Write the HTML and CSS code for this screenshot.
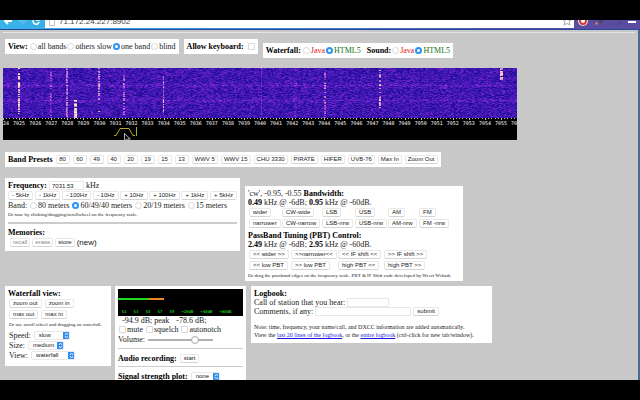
FILE: index.html
```html
<!DOCTYPE html>
<html lang="en">
<head>
    <meta charset="UTF-8">
    <meta name="viewport" content="width=device-width, initial-scale=1.0">
    <title>WebSDR</title>
    <link rel="stylesheet" href="styles.css">
</head>
<body>
    <header class="browser-bar">
        <nav class="browser-nav">
            <svg width="45" height="12" viewBox="0 0 45 12" fill="none" stroke-width="2">
                <path d="M12 5H5M8 2L5 5L8 8" stroke="#fff"/>
                <path d="M18 5H25M22 2L25 5L22 8" stroke="#5cbcec"/>
                <path d="M38.500 3.500A3 3 0 1 0 39 6M39 1V4H36" stroke="#fff" stroke-width="1.500"/>
            </svg>
        </nav>
        <div class="address">
            <svg width="6" height="9" viewBox="0 0 6 9" fill="#fff" stroke="#c4c4c4"><path d="M.5 .5h5v7h-5z"/></svg>
            <span class="url">71.172.24.227:8902</span>
            <svg width="10" height="10" viewBox="0 0 10 10" fill="none" stroke="#aaa"><path d="M5 0L6.200 3H9L7 5L8 8L5 6.500L2 8L3 5L1 3H3.800Z"/></svg>
        </div>
        <svg width="66" height="12" viewBox="0 0 66 12">
            <circle cx="9" cy="5" r="5" fill="#e8d5dc"/>
            <ellipse cx="9" cy="4.500" rx="3" ry="3.500" fill="#fff" stroke="#d8342c" stroke-width="2"/>
            <path d="M24 2h5v5h-3z" fill="#4a4660"/>
            <circle cx="22.500" cy="7.500" r="1.300" fill="#f08040"/>
            <path d="M38 4V2h8v6h-4M38 8h2" fill="none" stroke="#4a4470"/>
            <path d="M54 3h8M54 6h8" stroke="#fff" stroke-width="2"/>
        </svg>
    </header>

    <main class="page">
        <hr class="top-rule">
        <div class="row options">
            <form class="panel line">
                <b>View:</b>
                <label><input type="radio" name="view">all bands</label>
                <label><input type="radio" name="view">others slow</label>
                <label><input type="radio" name="view" checked>one band</label>
                <label><input type="radio" name="view">blind</label>
            </form>
            <div class="panel line">
                <label><b>Allow keyboard:</b> <input type="checkbox" class="keyboard"></label>
            </div>
            <form class="panel line lowered">
                <b>Waterfall:</b>
                <label class="java"><input type="radio" name="wf">Java</label>
                <label class="html5"><input type="radio" name="wf" checked>HTML5</label>
                <b class="sound">Sound:</b>
                <label class="java"><input type="radio" name="snd">Java</label>
                <label class="html5"><input type="radio" name="snd" checked>HTML5</label>
            </form>
        </div>

        <div class="waterfall">
            <canvas id="spectrum" width="514" height="52"></canvas>
            <div class="scale" id="scale"></div>
            <svg class="passband" width="28" height="11" viewBox="0 0 28 11" fill="none" stroke="#b8a828">
                <path d="M0 9.500H2L6 2.500H15L19 9.500H21"/>
                <path d="M22.500 1V10"/>
            </svg>
            <svg class="cursor" width="7" height="10" viewBox="0 0 7 10"><path d="M.5 .5V8L2.500 6.500L3.700 9.300L5 8.700L3.800 6H6.300Z" fill="#111" stroke="#ddd" stroke-width=".8"/></svg>
        </div>

        <div class="row presets-row">
            <div class="panel line presets">
                <b>Band Presets</b>
                <button>80</button>
                <button>60</button>
                <button>49</button>
                <button>40</button>
                <button>20</button>
                <button>19</button>
                <button>15</button>
                <button>13</button>
                <button>WWV 5</button>
                <button>WWV 15</button>
                <button>CHU 3330</button>
                <button>PIRATE</button>
                <button>HIFER</button>
                <button>UVB-76</button>
                <button>Max In</button>
                <button>Zoom Out</button>
            </div>
        </div>

        <div class="row tuning">
            <section class="panel frequency">
                <div class="freq-line">
                    <label for="freq"><b>Frequency:</b></label>
                    <input type="text" id="freq" class="freq-input" value="7031.53">
                    <span>kHz</span>
                </div>
                <div class="steps">
                    <button>- 5kHz</button>
                    <button>- 1kHz</button>
                    <button>- 100Hz</button>
                    <button>- 10Hz</button>
                    <button>+ 10Hz</button>
                    <button>+ 100Hz</button>
                    <button>+ 1kHz</button>
                    <button>+ 5kHz</button>
                </div>
                <form class="bands">
                    <span>Band:</span>
                    <label><input type="radio" name="band">80 meters</label>
                    <label><input type="radio" name="band" checked>60/49/40 meters</label>
                    <label><input type="radio" name="band">20/19 meters</label>
                    <label><input type="radio" name="band">15 meters</label>
                </form>
                <p class="hint">Or tune by clicking/dragging/scrollwheel on the frequency scale.</p>
                <hr>
                <h2>Memories:</h2>
                <div class="memories">
                    <button disabled>recall</button>
                    <button disabled>erase</button>
                    <button>store</button>
                    <span class="new">(new)</span>
                </div>
            </section>

            <section class="panel bandwidth">
                <p>'cw', -0.95, -0.55 <b>Bandwidth:</b></p>
                <p><b>0.49</b> kHz @ -6dB; <b>0.95</b> kHz @ -60dB.</p>
                <div class="modes">
                    <button>wider</button>
                    <button>CW-wide</button>
                    <button>LSB</button>
                    <button>USB</button>
                    <button>AM</button>
                    <button>FM</button>
                    <button>narrower</button>
                    <button>CW-narrow</button>
                    <button>LSB-nrw</button>
                    <button>USB-nrw</button>
                    <button>AM-nrw</button>
                    <button>FM -nrw</button>
                </div>
                <p><b>PassBand Tuning (PBT) Control:</b></p>
                <p><b>2.49</b> kHz @ -6dB; <b>2.95</b> kHz @ -60dB.</p>
                <div class="pbt">
                    <button>&lt;&lt; wider &gt;&gt;</button>
                    <button>&gt;&gt;narrower&lt;&lt;</button>
                    <button>&lt;&lt; IF shift &lt;&lt;</button>
                    <button>&gt;&gt; IF shift &gt;&gt;</button>
                    <button>&lt;&lt; low PBT</button>
                    <button>&gt;&gt; low PBT</button>
                    <button>high PBT &lt;&lt;</button>
                    <button>high PBT &gt;&gt;</button>
                </div>
                <p class="hint">Or drag the passband edges on the frequency scale. PBT &amp; IF Shift code developed by Weert Websdr.</p>
            </section>
        </div>

        <div class="row bottom">
            <section class="panel view">
                <h2>Waterfall view:</h2>
                <div class="zooms"><button>zoom out</button><button>zoom in</button></div>
                <div class="zooms"><button>max out</button><button>max in</button></div>
                <p class="hint">Or use scroll wheel and dragging on waterfall.</p>
                <div class="setting"><label for="speed">Speed:</label><select id="speed" class="select-short"><option>slow</option></select></div>
                <div class="setting"><label for="size">Size:</label><select id="size" class="select-short"><option>medium</option></select></div>
                <div class="setting"><label for="mode">View:</label><select id="mode" class="select-long"><option>waterfall</option></select></div>
            </section>

            <section class="panel audio">
                <div class="meter">
                    <div class="level"><div class="green" style="width: 25%"></div><div class="orange" style="width: 12%"></div></div>
                    <div class="marks">
                        <span>S1</span><span>S3</span><span>S5</span><span>S7</span><span>S9</span>
                        <span class="db">+20dB</span><span class="db">+40dB</span><span class="db">+60dB</span>
                    </div>
                </div>
                <p class="reading"><span>-94.9 dB; peak</span><span>-78.6 dB;</span></p>
                <div class="checks">
                    <label><input type="checkbox">mute</label>
                    <label><input type="checkbox">squelch</label>
                    <label><input type="checkbox">autonotch</label>
                </div>
                <div class="volume"><label for="vol">Volume:</label><input type="range" id="vol" min="0" max="100" value="76"></div>
                <hr>
                <div class="record"><b>Audio recording:</b><button>start</button></div>
                <hr>
                <div class="record"><label for="plot"><b>Signal strength plot:</b></label><select id="plot" class="select-plot"><option>none</option></select></div>
            </section>

            <form class="panel logbook">
                <h2>Logbook:</h2>
                <div class="field"><label for="call">Call of station that you hear:</label><input type="text" id="call" class="call"></div>
                <div class="field"><label for="comments">Comments, if any:</label><input type="text" id="comments" class="comments"><button type="button">submit</button></div>
                <p class="note">Note: time, frequency, your name/call, and DXCC information are added automatically.<br>
                View the <a href="#last">last 20 lines of the logbook</a>, or the <a href="#all">entire logbook</a> (ctrl-click for new tab/window).</p>
            </form>
        </div>
    </main>
    <script src="waterfall.js"></script>
</body>
</html>
```
FILE: styles.css
```css
* {
    box-sizing: border-box;
}
body {
    display: flex;
    flex-direction: column;
    height: 100vh;
    margin: 0;
    padding: 20px 0;
    background-color: #000;
    color: #222;
    font-family: "Liberation Serif", serif;
    font-size: 8px;
    line-height: 9px;
}
b, h2 {
    color: #000;
}
h2, p {
    margin: 0;
    font-size: 8px;
}
.browser-bar {
    display: flex;
    align-items: flex-end;
    flex: none;
    height: 10px;
    overflow: hidden;
    padding-bottom: 1px;
    background: linear-gradient(to right, #38b4ea, #3d8fd0 40%, #5a4ca0 85%);
    border-bottom: 1px solid #24489c;
}
.browser-bar svg {
    flex: none;
}
.browser-nav {
    height: 12px;
}
.address {
    display: flex;
    align-items: center;
    flex: 1;
    height: 12px;
    padding: 0 2px 0 4px;
    gap: 4px;
    background-color: #fff;
}
.url {
    flex: 1;
    color: #444;
    font-family: "Liberation Sans", sans-serif;
    font-size: 8px;
    line-height: 12px;
}
.page {
    flex: 1;
    overflow: hidden;
    padding: 0 3px;
    background-color: #c8c8c8;
    border-right: 2px solid #4a6a90;
}
hr {
    height: 2px;
    margin: 0;
    border: none;
    background-color: #ccc;
}
.top-rule {
    height: 1px;
    margin: 2px 0 6px;
    background-color: #e4e4e4;
}
.row {
    display: flex;
    align-items: flex-start;
    gap: 5px;
    padding: 0 2px;
    white-space: nowrap;
}
.panel {
    flex: none;
    padding: 3px;
    background-color: #fff;
}
.line {
    display: flex;
    align-items: center;
    height: 15px;
}
.lowered {
    margin-top: 4px;
}
.line > b {
    margin-right: 1px;
}
.line > .sound {
    margin: 0 0 0 6px;
}
.java {
    color: #e02020;
}
.html5 {
    color: #107010;
}
label {
    display: inline-flex;
    align-items: center;
}
input[type="radio"], input[type="checkbox"] {
    appearance: none;
    width: 7px;
    height: 7px;
    margin: 0 1px;
    border: 1px solid #d8d8d8;
    background-color: #fff;
}
input[type="radio"] {
    border-radius: 50%;
}
input[type="checkbox"] {
    border-radius: 1px;
}
input[type="radio"]:checked {
    border: 2px solid #2a94f4;
}
input.keyboard {
    margin: 0 0 0 4px;
}
button, select, input[type="text"] {
    height: 9px;
    margin: 0;
    border: 1px solid #e8e8e8;
    background-color: #fff;
    color: #222;
    font-family: "Liberation Sans", sans-serif;
    font-size: 6px;
    line-height: 7px;
}
button {
    padding: 0 3px;
    border-radius: 2px;
    border-bottom-color: #d4d4d4;
    white-space: nowrap;
}
button:disabled {
    color: #888;
}
.hint {
    font-size: 5px;
}

/* waterfall and frequency scale */
.waterfall {
    position: relative;
    width: 100%;
    max-width: 514px;
    height: 72px;
    margin-top: 10px;
    overflow: hidden;
    background-color: #000;
}
.waterfall canvas {
    display: block;
    width: 100%;
    height: 52px;
}
.scale {
    display: flex;
    margin: 0 -8px;
    color: #fff;
    font-family: "DejaVu Sans Mono", monospace;
    font-size: 5px;
    line-height: 6px;
    text-align: center;
}
.scale span {
    flex: 1;
}
.passband {
    display: block;
    margin-left: 111px;
}
.cursor {
    position: absolute;
    left: 121px;
    top: 65px;
}

.presets-row {
    margin-top: 12px;
}
.presets {
    gap: 3px;
}
.presets > b {
    margin: 0;
}
.presets button {
    min-width: 14px;
    padding: 0 2px;
}
.tuning {
    margin-top: 11px;
}
.frequency {
    width: 235px;
    padding-top: 2px;
}
.freq-line {
    display: flex;
    align-items: center;
    height: 11px;
    gap: 2px;
}
.freq-input {
    width: 35px;
}
.steps {
    display: flex;
    justify-content: space-between;
}
.bands {
    display: flex;
    align-items: center;
    height: 10px;
    gap: 2px;
}
.frequency .hint {
    line-height: 10px;
}
.frequency hr {
    margin: 2px 0 4px;
}
.memories {
    display: flex;
    align-items: center;
    gap: 2px;
    height: 11px;
    padding-left: 2px;
}
.memories button {
    padding: 0 2px;
}
.new {
    color: #111;
    font-family: "Liberation Sans", sans-serif;
}
.bandwidth {
    width: 218px;
    height: 95px;
    margin-top: 8px;
}
.modes, .pbt {
    display: grid;
    grid-auto-rows: 11px;
    align-items: center;
    justify-items: start;
    padding-left: 1px;
}
.modes {
    grid-template-columns: 33px 40px 33px 33px 31px auto;
    margin-bottom: 2px;
}
.pbt {
    grid-template-columns: 42px 47px 46px auto;
}

.bottom {
    margin-top: 5px;
    gap: 4px;
}
.view {
    width: 106px;
    height: 80px;
}
.zooms {
    display: flex;
    align-items: center;
    gap: 3px;
    height: 11px;
    padding-left: 1px;
}
.view .hint {
    padding-left: 1px;
    line-height: 10px;
}
.setting {
    display: flex;
    align-items: center;
    gap: 3px;
    height: 10px;
    padding-left: 1px;
}
select {
    appearance: none;
    padding: 0 8px 0 4px;
    border-radius: 2px;
    background: #fff url("data:image/svg+xml,%3Csvg xmlns='http://www.w3.org/2000/svg' width='7' height='9'%3E%3Cpath d='M0 0h7v9H0z' fill='%23308cf0'/%3E%3Cpath d='M2 4l1.500-2L5 4M2 5l1.500 2L5 5' fill='none' stroke='%23fff' stroke-width='.8'/%3E%3C/svg%3E") no-repeat right center;
    background-origin: border-box;
}
.select-short {
    width: 36px;
}
.select-long {
    width: 44px;
}
.select-plot {
    width: 29px;
}
.audio {
    width: 131px;
}
.meter {
    height: 27px;
    padding-top: 9px;
    background-color: #000;
}
.level {
    display: flex;
    height: 2px;
}
.green {
    background-color: #20d820;
}
.orange {
    background-color: #f08428;
}
.marks {
    display: flex;
    margin-top: 9px;
    color: #18b818;
    font-family: "DejaVu Sans Mono", monospace;
    font-size: 4px;
    font-weight: bold;
    line-height: 5px;
    text-align: center;
}
.marks span {
    width: 12px;
}
.marks .db {
    width: 19px;
}
.reading {
    display: flex;
    gap: 7px;
    padding-left: 4px;
}
.checks {
    display: flex;
    gap: 2px;
}
.volume {
    display: flex;
    align-items: center;
    gap: 3px;
    height: 11px;
}
.volume input {
    appearance: none;
    width: 65px;
    height: 2px;
    margin: 0;
    background-color: #b0b0b0;
}
.volume input::-webkit-slider-thumb {
    appearance: none;
    width: 8px;
    height: 8px;
    border: 1px solid #aaa;
    border-radius: 50%;
    background-color: #fff;
}
.audio hr {
    margin-top: 3px;
    height: 1px;
}
.record {
    display: flex;
    align-items: center;
    gap: 3px;
    height: 14px;
    margin-top: 2px;
}
.record + hr {
    margin-top: 1px;
}
.logbook {
    width: 241px;
    height: 57px;
    margin-left: 1px;
}
.field {
    display: flex;
    align-items: center;
    gap: 2px;
}
.call {
    width: 42px;
}
.comments {
    width: 96px;
}
.note {
    margin-top: 7px;
    font-size: 6px;
    line-height: 8px;
}
a {
    color: #1818dd;
}
```
FILE: waterfall.js
```js
const canvas = document.getElementById('spectrum');
const ctx = canvas.getContext('2d');
const height = 50;

// x, top, bottom, width, strength, share of rows lit
const signals = [
    [15, 0, 46, 2, 0.7, 0.75],
    [47, 0, 50, 2, 0.35, 0.65],
    [63, 0, 50, 2, 0.45, 0.7],
    [71, 32, 50, 3, 0.75, 0.85],
    [95, 0, 44, 2, 0.5, 0.6],
    [120, 5, 50, 2, 0.42, 0.6],
    [160, 0, 50, 1, 0.55, 0.6],
    [258, 0, 50, 1, 0.2, 1],
    [291, 0, 50, 3, 0.1, 1],
    [321, 0, 50, 2, 0.45, 0.6],
    [376, 2, 41, 2, 0.6, 0.6],
    [497, 0, 14, 3, 0.7, 0.85]
];

let seed = 7;
function random() {
    seed = (seed * 16807) % 2147483647;
    return seed / 2147483647;
}

// level 0..1 to navy, violet, pink, yellow
const stops = [[16, 8, 125], [60, 22, 180], [130, 40, 210], [215, 140, 205], [250, 245, 180]];
function color(level) {
    const v = Math.max(0, Math.min(0.999, level)) * 4;
    const i = Math.floor(v);
    const f = v - i;
    return stops[i].map((c, k) => Math.round(c + (stops[i + 1][k] - c) * f));
}

for (let y = 0; y < height; y++) {
    const band = (y === 17 || y === 32) ? 0.12 : (Math.abs(y - 17) < 3 || Math.abs(y - 32) < 3) ? 0.04 : 0;
    const lit = signals.map(s => y >= s[1] && y < s[2] && random() < s[5]);
    let last = random();
    for (let x = 0; x < canvas.width; x++) {
        const next = random();
        let level = 0.02 + (last + next) * 0.23 + band;
        last = next;
        signals.forEach((s, i) => {
            if (lit[i] && x >= s[0] && x < s[0] + s[3]) {
                level += s[4] * (0.7 + random() * 0.3);
            }
        });
        ctx.fillStyle = `rgb(${color(level).join(',')})`;
        ctx.fillRect(x, y, 1, 1);
    }
}

// tick marks
ctx.fillStyle = '#000';
ctx.fillRect(0, height, canvas.width, 2);
ctx.fillStyle = '#bbb';
for (let i = 0; i <= 160; i++) {
    ctx.fillRect(Math.round(i * canvas.width / 160), height, 1, i % 5 === 0 ? 2 : 1);
}

const scale = document.getElementById('scale');
for (let khz = 7024; khz <= 7056; khz++) {
    const label = document.createElement('span');
    label.textContent = khz;
    scale.appendChild(label);
}
```
